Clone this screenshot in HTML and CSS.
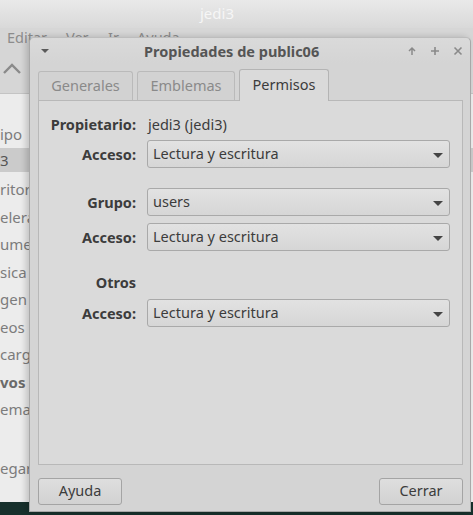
FILE: index.html
```html
<!DOCTYPE html>
<html>
<head>
<meta charset="utf-8">
<link rel="stylesheet" href="styles.css">
</head>
<body>
<div class="desktop">
  <div class="bgwin">
    <div class="bg-title">jedi3</div>
    <div class="bg-menu">
      <span class="m1">Editar</span><span class="m2">Ver</span><span class="m3">Ir</span><span class="m4">Ayuda</span>
    </div>
    <div class="bg-toolbar">
      <svg class="chev" width="20" height="14" viewBox="0 0 20 14"><path d="M2 11 L10 3 L18 11" fill="none" stroke="#8a8a8a" stroke-width="2.4"/></svg>
    </div>
    <ul class="bg-side">
      <li class="head">ipo</li>
      <li class="sel">3</li>
      <li>ritori</li>
      <li>elera</li>
      <li>ume</li>
      <li>sica</li>
      <li>gen</li>
      <li>eos</li>
      <li>carg</li>
      <li class="bold">vos</li>
      <li>ema</li>
      <li class="gap">egar</li>
    </ul>
  </div>

  <div class="dialog">
    <div class="d-title">
      <svg class="d-menu" width="10" height="6" viewBox="0 0 10 6"><path d="M1 1 L9 1 L5 5 Z" fill="#5a5a5a"/></svg>
      <span class="d-text">Propiedades de public06</span>
      <span class="d-ctrls">
        <svg width="10" height="10" viewBox="0 0 10 10"><path d="M5 9 V2 M2 5 L5 2 L8 5" fill="none" stroke="#8a8a8a" stroke-width="1.5"/></svg>
        <svg width="10" height="10" viewBox="0 0 10 10"><path d="M5 1 V9 M1 5 H9" fill="none" stroke="#8a8a8a" stroke-width="1.6"/></svg>
        <svg width="10" height="10" viewBox="0 0 10 10"><path d="M1.5 1.5 L8.5 8.5 M8.5 1.5 L1.5 8.5" fill="none" stroke="#8a8a8a" stroke-width="1.6"/></svg>
      </span>
    </div>
    <div class="tabs">
      <div class="tab t1">Generales</div>
      <div class="tab t2">Emblemas</div>
      <div class="tab active">Permisos</div>
    </div>
    <div class="panel">
      <div class="row r1"><span class="lbl">Propietario:</span><span class="val">jedi3 (jedi3)</span></div>
      <div class="row r2"><span class="lbl">Acceso:</span><div class="combo">Lectura y escritura<i class="arr"></i></div></div>
      <div class="row r3"><span class="lbl">Grupo:</span><div class="combo">users<i class="arr"></i></div></div>
      <div class="row r4"><span class="lbl">Acceso:</span><div class="combo">Lectura y escritura<i class="arr"></i></div></div>
      <div class="row r5"><span class="lbl">Otros</span></div>
      <div class="row r6"><span class="lbl">Acceso:</span><div class="combo">Lectura y escritura<i class="arr"></i></div></div>
    </div>
    <div class="buttons">
      <div class="btn">Ayuda</div>
      <div class="btn">Cerrar</div>
    </div>
  </div>
</div>
</body>
</html>
```

FILE: styles.css
```css
html, body {
  margin: 0;
  padding: 0;
}
body {
  width: 473px;
  height: 515px;
  overflow: hidden;
  background: #17302c;
  font-family: "Noto Sans", "Open Sans", sans-serif;
  font-size: 14.5px;
  color: #3c3c3c;
}
.desktop {
  position: relative;
  width: 473px;
  height: 515px;
}
.bgwin {
  position: absolute;
  left: 0;
  top: 0;
  width: 473px;
  height: 502px;
  background: #ececec;
  display: flex;
  flex-direction: column;
}
.bg-title {
  height: 28px;
  background: linear-gradient(#e9e9e9, #d9d9d9);
  color: #f6f6f6;
  font-size: 15px;
  line-height: 26px;
  padding-left: 200px;
  text-shadow: 0 0 1px #e0e0e0;
}
.bg-menu {
  height: 22px;
  background: #d6d6d6;
  color: #8c8c8c;
  font-size: 14.5px;
  line-height: 18px;
  position: relative;
}
.bg-menu span { position: absolute; top: 0; }
.bg-menu .m1 { left: 7px; }
.bg-menu .m2 { left: 66px; }
.bg-menu .m3 { left: 108px; }
.bg-menu .m4 { left: 137px; }
.bg-toolbar {
  height: 43px;
  background: #d6d6d6;
  border-bottom: 1px solid #c4c4c4;
}
.chev {
  margin: 12px 0 0 2px;
  display: block;
}
.bg-side {
  list-style: none;
  margin: 0;
  padding: 40px 0 0;
  color: #7c7c7c;
  font-size: 15px;
}
.bg-side li {
  height: 27.5px;
  line-height: 27.5px;
  padding-left: 0;
}
.bg-side li.head { height: 24px; line-height: 24px; margin-top: -12px; }
.bg-side li.sel {
  background: #cbcbcb;
  color: #555;
  height: 24px;
  line-height: 24px;
  margin-top: 2px;
  margin-bottom: 4px;
}
.bg-side li.bold { font-weight: bold; color: #6a6a6a; }
.bg-side li.gap { margin-top: 31px; }

.dialog {
  position: absolute;
  left: 29px;
  top: 37px;
  width: 440px;
  height: 473px;
  border: 1px solid #a8a8a8;
  border-top-color: #bdbdbd;
  border-radius: 5px 5px 0 0;
  background: #d4d4d4;
  display: flex;
  flex-direction: column;
  box-shadow: -3px 0 6px rgba(0,0,0,0.18);
}
.d-title {
  height: 25px;
  display: flex;
  align-items: center;
  background: linear-gradient(#dadada, #d4d4d4);
  border-radius: 5px 5px 0 0;
  position: relative;
}
.d-menu {
  margin-left: 10px;
  margin-top: 1px;
}
.d-text {
  margin-left: 94px;
  font-weight: bold;
  color: #555;
}
.d-ctrls {
  position: absolute;
  right: 7px;
  top: 8px;
  display: flex;
  gap: 13px;
}
.d-ctrls svg { display: block; }
.tabs {
  display: flex;
  gap: 4px;
  margin: 7px 0 0 8px;
  height: 30px;
  align-items: flex-end;
  position: relative;
  z-index: 1;
}
.tab {
  height: 29px;
  line-height: 26px;
  border: 1px solid #bababa;
  border-bottom: none;
  border-radius: 3px 3px 0 0;
  color: #8a8a8a;
  background: #d2d2d2;
  text-align: center;
  box-sizing: border-box;
}
.t1 { width: 95px; }
.t2 { width: 98px; }
.tab.active {
  width: 90px;
  height: 32px;
  line-height: 29px;
  background: #dadada;
  color: #3c3c3c;
  border-color: #b4b4b4;
  margin-bottom: -1px;
}
.panel {
  margin: 0 7px 0 8px;
  height: 363px;
  border: 1px solid #b8b8b8;
  background: #dadada;
  display: flex;
  flex-direction: column;
}
.row {
  display: flex;
  align-items: center;
}
.lbl {
  width: 97px;
  text-align: right;
  font-weight: bold;
  color: #3c3c3c;
  flex: none;
}
.val { margin-left: 12px; }
.r1 { height: 20px; margin-top: 13px; }
.r2 { margin-top: 6px; }
.r3 { margin-top: 20px; }
.r4 { margin-top: 7px; }
.r5 { height: 20px; margin-top: 21px; }
.r6 { margin-top: 7px; }
.combo {
  margin-left: 11px;
  width: 303px;
  height: 28px;
  box-sizing: border-box;
  border: 1px solid #a9a9a9;
  border-radius: 3px;
  background: linear-gradient(#e2e2e2, #d6d6d6);
  line-height: 25px;
  padding-left: 5px;
  position: relative;
  color: #3c3c3c;
}
.arr {
  position: absolute;
  right: 6px;
  top: 12px;
  width: 0;
  height: 0;
  border-left: 5px solid transparent;
  border-right: 5px solid transparent;
  border-top: 5px solid #444;
}
.buttons {
  display: flex;
  justify-content: space-between;
  margin: 13px 7px 0 8px;
}
.btn {
  width: 84px;
  height: 27px;
  box-sizing: border-box;
  border: 1px solid #a4a4a4;
  border-radius: 3px;
  background: linear-gradient(#dedede, #d2d2d2);
  text-align: center;
  line-height: 22px;
  color: #3c3c3c;
}
```
